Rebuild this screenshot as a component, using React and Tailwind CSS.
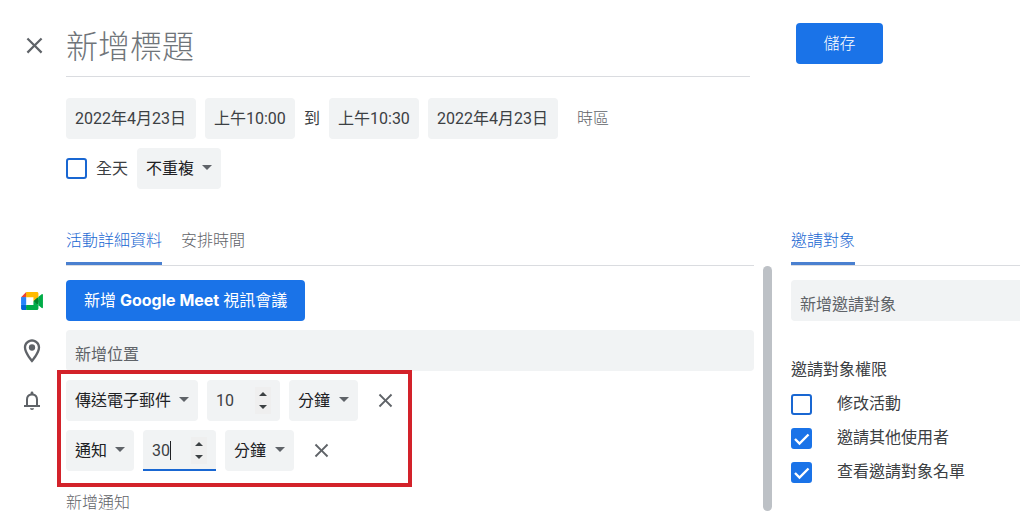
import React from 'react';

const field = 'h-[41px] rounded bg-[#f1f3f4] text-base text-[#3c4043] outline-none';

function CloseIcon({ className }) {
  return (
    <svg viewBox="0 0 24 24" className={className} fill="currentColor" aria-hidden="true">
      <path d="M19 6.41L17.59 5 12 10.59 6.41 5 5 6.41 10.59 12 5 17.59 6.41 19 12 13.41 17.59 19 19 17.59 13.41 12z" />
    </svg>
  );
}

function MeetIcon() {
  return (
    <svg viewBox="0 0 87.5 72" className="h-[18px] w-[22px]" aria-hidden="true">
      <path fill="#00832d" d="M49.5 36l8.53 9.75 11.47 7.33 2-17.02-2-16.64-11.69 6.44z" />
      <path fill="#0066da" d="M0 51.5V66c0 3.315 2.685 6 6 6h14.5l3-10.96-3-9.54-9.95-3z" />
      <path fill="#e94235" d="M20.5 0L0 20.5l10.55 3 9.95-3 2.95-9.41z" />
      <path fill="#2684fc" d="M20.5 20.5H0v31h20.5z" />
      <path fill="#00ac47" d="M82.6 8.68L69.5 19.42v33.66l13.16 10.79c1.97 1.54 4.85.135 4.85-2.37V11c0-2.535-2.945-3.925-4.91-2.32zM49.5 36v15.5h-29V72h43c3.315 0 6-2.685 6-6V53.08z" />
      <path fill="#ffba00" d="M63.5 0h-43v20.5h29V36l20-16.57V6c0-3.315-2.685-6-6-6z" />
    </svg>
  );
}

function PinIcon() {
  return (
    <svg viewBox="0 0 24 24" className="size-[28px]" fill="currentColor" aria-hidden="true">
      <path d="M12 2C8.13 2 5 5.13 5 9c0 5.25 7 13 7 13s7-7.75 7-13c0-3.87-3.13-7-7-7zM7 9c0-2.76 2.24-5 5-5s5 2.24 5 5c0 2.88-2.88 7.19-5 9.88C9.92 16.21 7 11.85 7 9z" />
      <circle cx="12" cy="9" r="2.7" />
    </svg>
  );
}

function BellIcon() {
  return (
    <svg viewBox="0 0 24 24" className="size-6" fill="currentColor" aria-hidden="true">
      <path d="M18 16v-5.5c0-3-1.7-5.3-4.6-5.9V4a1.4 1.4 0 0 0-2.8 0v.6C7.7 5.2 6 7.5 6 10.5V16H4v2h16v-2h-2zM8 16v-5.5c0-2.4 1.5-4 4-4s4 1.6 4 4V16H8zm4 5c1.1 0 2-.7 2-1.7h-4c0 1 .9 1.7 2 1.7z" />
    </svg>
  );
}

function Dropdown({ label, options, width }) {
  return (
    <div className={`relative ${width}`}>
      <select aria-label={label} className={`${field} w-full appearance-none pl-[9px] pr-6 text-[#202124]`}>
        {options.map((o) => (
          <option key={o}>{o}</option>
        ))}
      </select>
      <svg viewBox="0 0 10 5" className="pointer-events-none absolute right-[9px] top-[17px] h-[5px] w-[10px]" aria-hidden="true">
        <path d="M0 0h10L5 5z" fill="#5f6368" />
      </svg>
    </div>
  );
}

function NumberField({ label, value, active }) {
  return (
    <div className="relative w-[73px]">
      <input
        type="number"
        aria-label={label}
        defaultValue={value}
        className={`${field} w-full appearance-none pl-[9px] pr-7 [appearance:textfield] [&::-webkit-inner-spin-button]:appearance-none ${active ? 'rounded-b-none shadow-[inset_0_-2px_0_#1967d2]' : ''}`}
      />
      {active && <span className="absolute left-[27px] top-[11px] h-[19px] w-px bg-[#202124]" />}
      <svg viewBox="0 0 16 27" className="pointer-events-none absolute right-[9px] top-[7px] h-[27px] w-4 bg-[#efefef]" aria-hidden="true">
        <path d="M4 9h8L8 5zM4 18h8l-4 4z" fill="#3c4043" />
      </svg>
    </div>
  );
}

function RemoveButton() {
  return (
    <button type="button" aria-label="移除通知" className="flex h-[41px] w-9 items-center justify-center text-[#5f6368]">
      <CloseIcon className="size-[23px]" />
    </button>
  );
}

function CheckBox({ id, label, checked, gap }) {
  return (
    <div className={`flex items-center ${gap}`}>
      <span className="relative flex size-[21px]">
        <input
          id={id}
          type="checkbox"
          defaultChecked={checked}
          className="peer size-[21px] appearance-none rounded-[3px] border-2 border-[#1967d2] bg-white checked:border-[#1a73e8] checked:bg-[#1a73e8]"
        />
        <svg viewBox="0 0 21 21" className="pointer-events-none absolute inset-0 hidden peer-checked:block" aria-hidden="true">
          <path d="M4 11l4.5 4.5L17.5 6.5" fill="none" stroke="#fff" strokeWidth="2.4" />
        </svg>
      </span>
      <label htmlFor={id} className="text-base leading-6 text-[#3c4043]">{label}</label>
    </div>
  );
}

function Row({ icon, children }) {
  return (
    <div className="flex">
      <div className="flex h-[41px] w-[66px] shrink-0 items-center pr-[2px] text-[#5f6368]">
        <span className="flex w-full justify-center">{icon}</span>
      </div>
      <div className="min-w-0 flex-1">{children}</div>
    </div>
  );
}

export default function App() {
  return (
    <main className="bg-white font-['Roboto','Noto_Sans_CJK_TC',sans-serif] text-base text-[#3c4043]">
      <header className="flex items-start">
        <button type="button" aria-label="關閉" className="mt-[25px] flex h-[41px] w-[66px] items-center justify-center pl-[2px] text-[#5f6368]">
          <CloseIcon className="size-[27px]" />
        </button>
        <input
          aria-label="標題"
          placeholder="新增標題"
          className="mt-4 h-[61px] min-w-0 flex-1 border-b border-[#dadce0] pt-[2px] text-[32px] font-light outline-none placeholder:text-[#70757a]"
        />
        <div className="w-[270px] shrink-0 pl-[46px] pt-[23px]">
          <button type="button" className="h-[41px] w-[87px] rounded bg-[#1a73e8] text-base font-light text-white">儲存</button>
        </div>
      </header>

      <section className="flex flex-col gap-[9px] pl-[66px] pt-[21px]">
        <div className="flex items-center gap-[9px]">
          <input aria-label="開始日期" defaultValue="2022年4月23日" className={`${field} w-[130px] px-[9px] pb-[3px]`} />
          <input aria-label="開始時間" defaultValue="上午10:00" className={`${field} w-[90px] px-[9px] pb-[3px]`} />
          <span>到</span>
          <input aria-label="結束時間" defaultValue="上午10:30" className={`${field} w-[90px] px-[9px] pb-[3px]`} />
          <input aria-label="結束日期" defaultValue="2022年4月23日" className={`${field} w-[130px] px-[9px] pb-[3px]`} />
          <button type="button" className="px-[10px] font-light text-[#5f6368]">時區</button>
        </div>
        <div className="flex items-center gap-[9px]">
          <CheckBox id="all-day" label="全天" gap="gap-[9px]" />
          <Dropdown label="重複" options={['不重複']} width="w-[84px]" />
        </div>
      </section>

      <div className="flex pt-[27px]">
        <section className="min-w-0 flex-1">
          <nav className="ml-[66px] flex h-[50px] gap-[19px] border-b border-[#dadce0] font-light">
            <button type="button" className="border-b-[3px] border-[#4a80d0] pt-1 text-[#1967d2]">活動詳細資料</button>
            <button type="button" className="border-b-[3px] border-transparent pt-1 text-[#5f6368]">安排時間</button>
          </nav>
          <div className="flex flex-col gap-[9px] pt-[14px]">
            <Row icon={<MeetIcon />}>
              <button type="button" className="h-[41px] rounded bg-[#1a73e8] px-[18px] text-base text-white">
                新增 <span className="font-['Inter'] font-bold">Google Meet</span> 視訊會議
              </button>
            </Row>
            <Row icon={<PinIcon />}>
              <input aria-label="位置" placeholder="新增位置" className={`${field} w-full px-[9px] pt-[7px] placeholder:text-[#5f6368]`} />
            </Row>
            <Row icon={<BellIcon />}>
              <div className="relative flex w-fit flex-col gap-[9px]">
                <div className="flex gap-[9px]">
                  <Dropdown label="通知方式" options={['傳送電子郵件', '通知']} width="w-[132px]" />
                  <NumberField label="提前時間" value="10" />
                  <Dropdown label="時間單位" options={['分鐘', '小時']} width="w-[69px]" />
                  <RemoveButton />
                </div>
                <div className="flex gap-[9px]">
                  <Dropdown label="通知方式" options={['通知', '傳送電子郵件']} width="w-[68px]" />
                  <NumberField label="提前時間" value="30" active />
                  <Dropdown label="時間單位" options={['分鐘', '小時']} width="w-[69px]" />
                  <RemoveButton />
                </div>
                <div className="pointer-events-none absolute -bottom-4 -left-[9px] -right-[9px] -top-[10px] border-4 border-[#d3222a]" />
              </div>
              <button type="button" className="mt-5 font-light text-[#5f6368]">新增通知</button>
            </Row>
          </div>
        </section>

        <div className="mb-1 ml-[9px] mt-[50px] w-[9px] shrink-0 rounded-full bg-[#bdc1c6]" />

        <aside className="ml-[19px] w-[229px] shrink-0">
          <div className="flex h-[50px] border-b border-[#dadce0] font-light">
            <button type="button" className="border-b-[3px] border-[#4a80d0] pt-1 text-[#1967d2]">邀請對象</button>
          </div>
          <input aria-label="邀請對象" placeholder="新增邀請對象" className={`${field} mt-[14px] w-full rounded-r-none px-[9px] pt-[7px] placeholder:text-[#5f6368]`} />
          <h2 className="mt-[37px] text-base leading-6">邀請對象權限</h2>
          <div className="mt-[10px] flex flex-col gap-[10px]">
            <CheckBox id="edit" label="修改活動" gap="gap-[25px]" />
            <CheckBox id="invite" label="邀請其他使用者" checked gap="gap-[25px]" />
            <CheckBox id="list" label="查看邀請對象名單" checked gap="gap-[25px]" />
          </div>
        </aside>
      </div>
    </main>
  );
}
